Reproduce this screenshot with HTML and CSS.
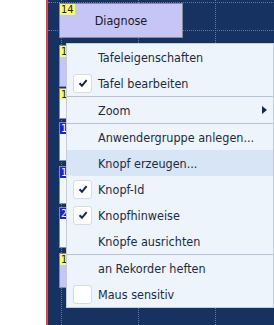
FILE: index.html
```html
<!DOCTYPE html>
<html lang="de">
<head>
  <meta charset="UTF-8" />
  <title>Tafel</title>
  <link rel="stylesheet" href="styles.css">
</head>
<body>
  <div class="stage">
    <div class="gutter"></div>
    <div class="rule"></div>
    <div class="board">
      <div class="grid-v" style="left: 13px"></div>
      <div class="grid-v" style="left: 90px"></div>
      <div class="grid-v" style="left: 167px"></div>
      <div class="grid-h" style="top: 2px"></div>
      <div class="grid-h" style="top: 30px"></div>

      <div class="knopf lila" style="top: 3px; height: 35px; width: 124px">
        <span class="badge gelb">14</span>
        Diagnose
      </div>
      <div class="knopf lila" style="top: 45px; height: 42px"><span class="badge gelb">1</span></div>
      <div class="knopf weiss" style="top: 88px; height: 31px"><span class="badge gelb">1</span></div>
      <div class="knopf weiss" style="top: 122px; height: 39px"><span class="badge blau">1</span></div>
      <div class="knopf weiss" style="top: 166px; height: 38px"><span class="badge blau">1</span></div>
      <div class="knopf weiss" style="top: 207px; height: 41px"><span class="badge blau">2</span></div>
      <div class="knopf lila" style="top: 253px; height: 35px"><span class="badge gelb">1</span></div>

      <ul class="menu">
        <li class="item"><span class="check"></span>Tafeleigenschaften</li>
        <li class="item"><span class="check box"><svg viewBox="0 0 10 10" width="10" height="10"><path d="M1.5 5.2 L4 7.8 L8.6 2.2" /></svg></span>Tafel bearbeiten</li>
        <li class="sep"></li>
        <li class="item"><span class="check"></span>Zoom<span class="arrow"></span></li>
        <li class="sep"></li>
        <li class="item"><span class="check"></span>Anwendergruppe anlegen...</li>
        <li class="item active"><span class="check"></span>Knopf erzeugen...</li>
        <li class="item"><span class="check box"><svg viewBox="0 0 10 10" width="10" height="10"><path d="M1.5 5.2 L4 7.8 L8.6 2.2" /></svg></span>Knopf-Id</li>
        <li class="item"><span class="check box"><svg viewBox="0 0 10 10" width="10" height="10"><path d="M1.5 5.2 L4 7.8 L8.6 2.2" /></svg></span>Knopfhinweise</li>
        <li class="item"><span class="check"></span>Knöpfe ausrichten</li>
        <li class="sep"></li>
        <li class="item"><span class="check"></span>an Rekorder heften</li>
        <li class="item"><span class="check box"></span>Maus sensitiv</li>
      </ul>
    </div>
  </div>
</body>
</html>
```

FILE: styles.css
```css
body {
  margin: 0;
  background-color: #fff;
  font-family: "DejaVu Sans", Verdana, sans-serif;
  font-stretch: condensed;
  font-size: 12.5px;
  overflow: hidden;
}

.stage {
  display: flex;
  width: 274px;
  height: 325px;
}

.gutter {
  width: 46px;
  background-color: #fff;
}

.rule {
  width: 2px;
  background-color: #e2404f;
}

.board {
  flex: 1;
  position: relative;
  background-color: #163260;
  overflow: hidden;
}

.grid-v {
  position: absolute;
  top: 0;
  bottom: 0;
  width: 0;
  border-left: 1px dotted #5a7aa8;
}

.grid-h {
  position: absolute;
  left: 0;
  right: 0;
  height: 0;
  border-top: 1px dotted #5a7aa8;
}

.knopf {
  position: absolute;
  left: 11px;
  width: 60px;
  box-sizing: border-box;
  border: 1px solid #8a8a9a;
  display: flex;
  align-items: center;
  justify-content: center;
  color: #1a1a1a;
}

.lila {
  background-color: #c6c6f6;
}

.weiss {
  background-color: #f4f6fa;
}

.badge {
  position: absolute;
  top: 0;
  left: 0;
  padding: 0 1px;
  height: 11px;
  line-height: 11px;
  font-size: 11px;
}

.gelb {
  background-color: #fbfb6c;
  color: #222;
}

.blau {
  background-color: #1e22d0;
  color: #fff;
}

.menu {
  position: absolute;
  left: 18px;
  top: 43px;
  width: 208px;
  box-sizing: border-box;
  margin: 0;
  padding: 0;
  list-style: none;
  background-color: #eef4fb;
  border: 1px solid #c4ccd6;
  color: #1c2b44;
}

.item {
  position: relative;
  height: 26px;
  display: flex;
  align-items: center;
  padding-left: 6px;
}

.item.active {
  background-color: #d8e5f6;
}

.check {
  width: 19px;
  height: 19px;
  margin-right: 6px;
  box-sizing: border-box;
  display: flex;
  align-items: center;
  justify-content: center;
}

.check.box {
  background-color: #fff;
  border: 1px solid #d4dce6;
  border-radius: 3px;
}

.check path {
  fill: none;
  stroke: #14284a;
  stroke-width: 2;
}

.sep {
  height: 1px;
  background-color: #b6c2d0;
}

.arrow {
  position: absolute;
  right: 6px;
  top: 9px;
  width: 0;
  height: 0;
  border-top: 4px solid transparent;
  border-bottom: 4px solid transparent;
  border-left: 5px solid #14284a;
}
```
